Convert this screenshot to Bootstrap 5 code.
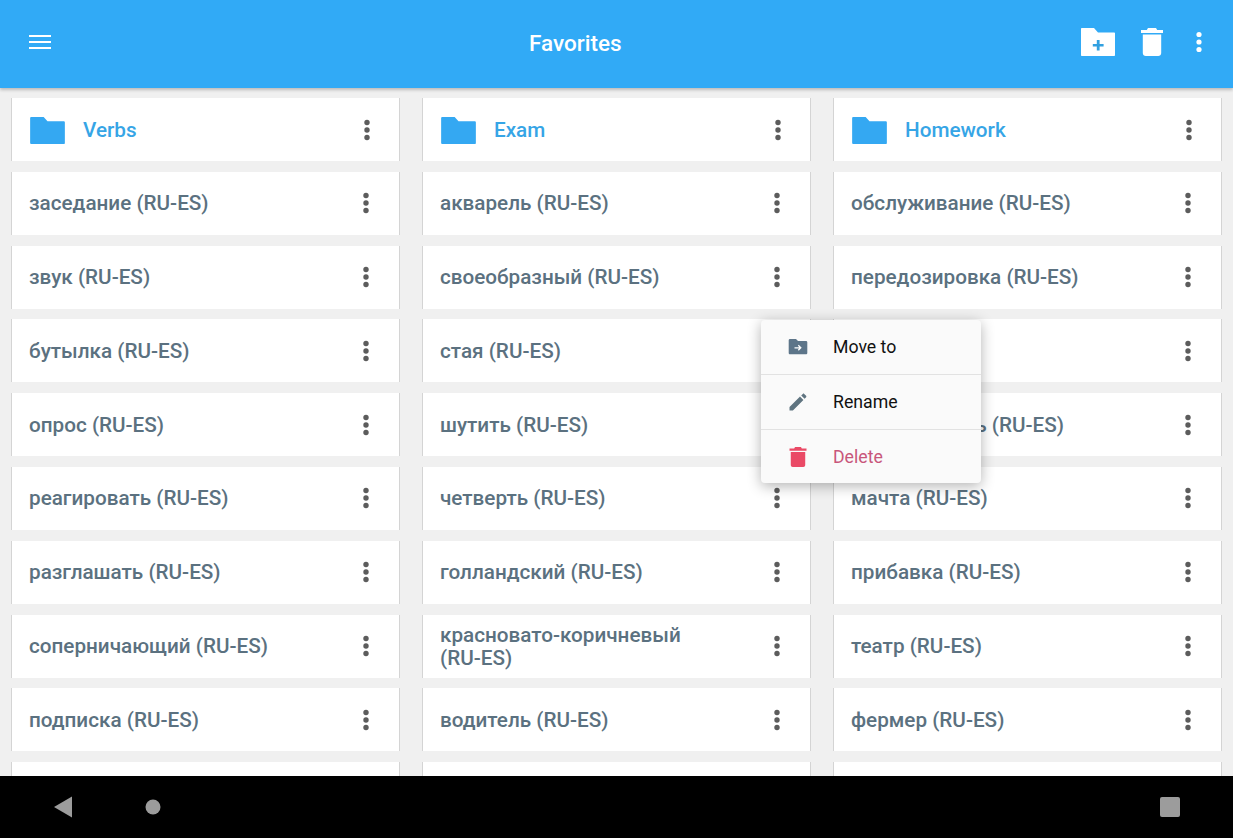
<!DOCTYPE html>
<html lang="ru">
<head>
<meta charset="utf-8">
<title>Favorites</title>
<link href="https://cdn.jsdelivr.net/npm/bootstrap@5.3.0/dist/css/bootstrap.min.css" rel="stylesheet">
<style>
html,body{height:100%;}
body{font-family:Roboto,"Liberation Sans",sans-serif;background:#f0f0f0;overflow:hidden;}
.app-shell{height:838px;position:relative;}
.app-bar{flex:0 0 88px;background:#31aaf6;box-shadow:0 2px 3px rgba(0,0,0,.22);z-index:2;padding:0 30px 4px 29px;position:relative;}
.app-title{font-size:22.5px;font-weight:500;color:#fff;line-height:1;padding-top:2px;}
.bar-left{width:500px;}
.bar-actions{margin-left:auto;}
.bar-trash{margin:0 32px 0 26px;}
.content-area{overflow:hidden;padding:10px 11px 0;min-height:0;}
.card-grid{display:grid;grid-template-columns:repeat(3,389px);column-gap:22px;grid-auto-rows:63px;row-gap:10.8px;}
.tile{background:#fff;border-left:1px solid #d4d4d4;border-right:1px solid #d4d4d4;padding:1px 29px 0 17px;}
.tile-label{font-size:20.7px;font-weight:500;color:#5b7180;line-height:23px;width:280px;}
.tile-folder{color:#36a5e6;}
.folder-ico{width:35px;height:27px;margin-right:18px;margin-left:1px;flex:none;}
.dots-ico{width:8px;height:22px;flex:none;margin-top:-1px;}
.pop-menu{position:absolute;left:761px;top:320px;width:220px;height:163px;background:#fafafa;box-shadow:0 3px 14px rgba(0,0,0,.3);z-index:3;}
.pop-row{height:54.3px;padding-left:27px;font-size:17.7px;color:#111;}
.pop-row+.pop-row{border-top:1px solid #e2e2e2;}
.pop-ico{width:20px;height:20px;margin-right:25px;flex:none;}
.pop-danger{color:#c8567a;padding-top:2px;}
.sys-bar{flex:0 0 62px;background:#000;position:relative;z-index:2;padding:0 53px;}
.sys-home{margin-left:72px;}
</style>
</head>
<body>
<div class="app-shell d-flex flex-column">
  <header class="app-bar d-flex align-items-center">
    <div class="bar-left">
      <svg class="d-block" width="22" height="16" viewBox="0 0 22 16"><path fill="#fff" d="M0 1h22v2H0zM0 7h22v2H0zM0 13h22v2H0z"/></svg>
    </div>
    <div class="app-title">Favorites</div>
    <div class="d-flex align-items-center bar-actions">
      <svg width="34" height="28" viewBox="0 0 34 28"><path fill="#fff" d="M0 1c0-.6.4-1 1-1h12l4 4.500h16c.6 0 1 .4 1 1V27c0 .6-.4 1-1 1H1c-.6 0-1-.4-1-1z"/><path fill="#31a0e0" d="M15.800 12h2.800v4h4v2.600h-4v4h-2.800v-4h-4V16h4z"/></svg>
      <svg class="bar-trash" width="22" height="28" viewBox="0 0 22 28"><path fill="#fff" d="M7 0h8l1.200 2H22v3H0V2h5.800zM1.800 6.500h18.400V25c0 1.700-1.300 3-3 3H4.800c-1.700 0-3-1.300-3-3z"/></svg>
      <svg width="8" height="22" viewBox="0 0 8 22"><g fill="#fff"><circle cx="4" cy="3.500" r="2.600"/><circle cx="4" cy="11" r="2.600"/><circle cx="4" cy="18.500" r="2.600"/></g></svg>
    </div>
  </header>

  <main class="content-area flex-grow-1">
    <div class="card-grid" id="grid"></div>
  </main>

  <div class="pop-menu rounded-1">
    <div class="pop-row d-flex align-items-center">
      <svg class="pop-ico" viewBox="0 0 20 20"><path fill="#5d7589" d="M2 2h6l2 2h8c.8 0 1.300.6 1.300 1.300V16c0 .8-.6 1.300-1.300 1.300H2c-.8 0-1.300-.6-1.300-1.300V3.300C.7 2.600 1.200 2 2 2z"/><path fill="none" stroke="#fff" stroke-width="1.300" d="M6.500 10.800h6M10.300 8.300l2.500 2.500-2.500 2.500"/></svg>
      <span>Move to</span>
    </div>
    <div class="pop-row d-flex align-items-center">
      <svg class="pop-ico" viewBox="0 0 20 20"><path fill="#5f7480" d="M1.500 18.500v-3.400L12 4.600l3.400 3.400L4.900 18.500zM13.200 3.400l1.600-1.500c.4-.4 1-.4 1.400 0l1.900 1.900c.4.400.4 1 0 1.400l-1.500 1.600z"/></svg>
      <span>Rename</span>
    </div>
    <div class="pop-row d-flex align-items-center pop-danger">
      <svg class="pop-ico" viewBox="0 0 20 20"><path fill="#ea4a66" d="M6.500 0h7l1 1.500H20v2.200H0V1.500h5.500zM1.500 5h17v12.700c0 1.300-1 2.300-2.300 2.300H3.800c-1.300 0-2.300-1-2.300-2.300z" transform="translate(1.500 0) scale(.85 1)"/></svg>
      <span>Delete</span>
    </div>
  </div>

  <footer class="sys-bar d-flex align-items-center justify-content-between">
    <div class="d-flex align-items-center">
      <svg width="20" height="22" viewBox="0 0 20 22"><path fill="#9c9c9c" d="M19 .5v21L1 11z"/></svg>
      <svg class="sys-home" width="16" height="16" viewBox="0 0 16 16"><circle cx="8" cy="8" r="7.500" fill="#9c9c9c"/></svg>
    </div>
    <svg width="20" height="20" viewBox="0 0 20 20"><rect width="20" height="20" rx="2" fill="#9c9c9c"/></svg>
  </footer>
</div>
<script>
var rows=[
["Verbs","Exam","Homework"],
["заседание","акварель","обслуживание"],
["звук","своеобразный","передозировка"],
["бутылка","стая","лето"],
["опрос","шутить","руководитель"],
["реагировать","четверть","мачта"],
["разглашать","голландский","прибавка"],
["соперничающий","красновато-коричневый","театр"],
["подписка","водитель","фермер"],
["","",""]];
var dots='<svg class="dots-ico" viewBox="0 0 8 22"><g fill="#5c5c5c"><circle cx="4" cy="3.500" r="2.700"/><circle cx="4" cy="11" r="2.700"/><circle cx="4" cy="18.500" r="2.700"/></g></svg>';
var folder='<svg class="folder-ico" viewBox="0 0 36 28"><path fill="#34a8f2" d="M1 0h13l4 4.500h17c.6 0 1 .4 1 1V27c0 .6-.4 1-1 1H1c-.6 0-1-.4-1-1V1c0-.6.4-1 1-1z"/></svg>';
var html='';
rows.forEach(function(r,i){r.forEach(function(t){
  var body;
  if(i===0){body='<div class="d-flex align-items-center">'+folder+'<span class="tile-label tile-folder">'+t+'</span></div>';}
  else if(t){body='<span class="tile-label">'+t+' <span class="text-nowrap">(RU-ES)</span></span>';}
  else{body='<span></span>';}
  html+='<div class="tile d-flex align-items-center justify-content-between">'+body+(t?dots:'')+'</div>';
});});
document.getElementById('grid').innerHTML=html;
</script>
<script src="https://cdn.jsdelivr.net/npm/bootstrap@5.3.0/dist/js/bootstrap.bundle.min.js"></script>
</body>
</html>
